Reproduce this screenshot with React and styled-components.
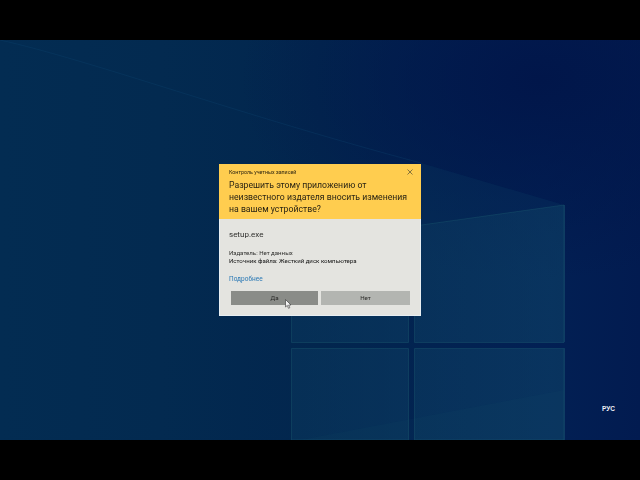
import React from 'react';
import styled, { createGlobalStyle } from 'styled-components';

const Global = createGlobalStyle`
  html, body {
    margin: 0;
    height: 100%;
    background: #000;
  }
`;

const Screen = styled.div`
  width: 640px;
  height: 480px;
  padding: 40px 0;
  box-sizing: border-box;
  background: #000;
  overflow: hidden;
  font-family: Roboto, 'Liberation Sans', sans-serif;
`;

const Desktop = styled.div`
  position: relative;
  height: 400px;
  display: flex;
  align-items: center;
  justify-content: center;
  overflow: hidden;
  background:
    radial-gradient(ellipse 300px 200px at 540px 40px, #01164a 0%, rgba(1, 22, 74, 0) 100%),
    linear-gradient(90deg, #032c52 0%, #032a50 25%, #02264e 50%, #022054 85%, #021b50 100%);
`;

const Wallpaper = styled.svg`
  position: absolute;
  inset: 0;
`;

const Dialog = styled.div`
  position: relative;
  width: 202px;
  height: 152px;
  display: flex;
  flex-direction: column;
  background: #e4e4e0;
  box-shadow: inset 0 0 0 1px #e8eef2;
`;

const Banner = styled.div`
  height: 55px;
  box-sizing: border-box;
  padding: 4px 10px 0;
  background: #ffcd4f;
  color: #2c2410;
`;

const TitleRow = styled.div`
  display: flex;
  align-items: center;
  justify-content: space-between;
  height: 8px;
  font-size: 5.3px;
  line-height: 8px;
  filter: blur(0.2px);
`;

const Close = styled.svg`
  width: 6px;
  height: 6px;
  margin-right: -2px;
  stroke: #7a6a3a;
  stroke-width: 0.9;
`;

const Question = styled.div`
  margin-top: 3px;
  font-size: 8.7px;
  line-height: 12px;
  color: #2a2414;
  white-space: nowrap;
  filter: blur(0.2px);
`;

const Content = styled.div`
  flex: 1;
  padding: 10px 10px 0;
  color: #2e2e2c;
`;

const FileName = styled.div`
  font-size: 8px;
  line-height: 12px;
  filter: blur(0.2px);
`;

const Details = styled.div`
  margin-top: 8px;
  font-size: 6.1px;
  line-height: 8px;
  filter: blur(0.2px);
`;

const Source = styled.div`
  color: #111;
`;

const MoreLink = styled.a`
  display: block;
  margin-top: 10px;
  font-size: 6.5px;
  line-height: 9px;
  color: #2b79b5;
  filter: blur(0.2px);
`;

const Buttons = styled.div`
  display: flex;
  gap: 3px;
  margin: 7px 1px 0 2px;
`;

const Button = styled.div`
  flex: ${(p) => p.$grow};
  height: 14px;
  display: flex;
  align-items: center;
  justify-content: center;
  font-size: 6.2px;
  color: #2a2a28;
  background: ${(p) => (p.$active ? '#8a8c88' : '#b3b5b1')};
  filter: blur(0.2px);
`;

const Cursor = styled.svg`
  position: absolute;
  left: 66px;
  top: 135px;
  width: 7px;
  height: 10px;
`;

const Lang = styled.div`
  position: absolute;
  right: 25px;
  bottom: 28px;
  font-family: 'Liberation Sans', sans-serif;
  font-size: 6.5px;
  font-weight: 700;
  color: #eef2f6;
`;

const App = () => (
  <Screen>
    <Global />
    <Desktop>
      <Wallpaper width="640" height="400" viewBox="0 0 640 400">
        <defs>
          <linearGradient id="pane" gradientUnits="userSpaceOnUse" x1="291" y1="0" x2="564" y2="0">
            <stop offset="0" stopColor="#0b3a60" stopOpacity="0.45" />
            <stop offset="1" stopColor="#10486a" stopOpacity="0.5" />
          </linearGradient>
        </defs>
        {/* light beam above the window */}
        <path d="M421 123 L564 165 L414 186 Z" fill="#0c4468" fillOpacity="0.22" />
        <path d="M0 0 C90 20 240 75 421 123" fill="none" stroke="#0e4670" strokeOpacity="0.3" strokeWidth="1" />
        {/* window panes */}
        <g fill="url(#pane)" stroke="#1f6074" strokeOpacity="0.35" strokeWidth="1">
          <path d="M291.5 215 L408.5 195 V302.5 H291.5 Z" />
          <path d="M414.5 186 L564 165 V302.5 H414.5 Z" />
          <path d="M291.5 308.5 H408.5 V400 H291.5 Z" />
          <path d="M414.5 308.5 H564 V400 H414.5 Z" />
        </g>
        <path d="M564 165 V302 H564.5 V165 Z M564 308 V400 H564.5 V308 Z" fill="#2c7a88" fillOpacity="0.5" />
        <path d="M300 400 L564 350 V400 Z" fill="#1b6478" fillOpacity="0.06" />
      </Wallpaper>
      <Dialog>
        <Banner>
          <TitleRow>
            Контроль учетных записей
            <Close viewBox="0 0 6 6">
              <path d="M0.5 0.5 L5.5 5.5 M5.5 0.5 L0.5 5.5" />
            </Close>
          </TitleRow>
          <Question>
            Разрешить этому приложению от
            <br />
            неизвестного издателя вносить изменения
            <br />
            на вашем устройстве?
          </Question>
        </Banner>
        <Content>
          <FileName>setup.exe</FileName>
          <Details>
            <div>Издатель: Нет данных</div>
            <Source>Источник файла: Жесткий диск компьютера</Source>
          </Details>
          <MoreLink>Подробнее</MoreLink>
          <Buttons>
            <Button $grow={87} $active>Да</Button>
            <Button $grow={89}>Нет</Button>
          </Buttons>
        </Content>
        <Cursor viewBox="0 0 7 10">
          <path d="M0.5 0.5 V8 L2.3 6.4 L3.5 9.3 L4.8 8.7 L3.6 6 H6 Z" fill="#f4f4f4" stroke="#333" strokeWidth="0.6" />
        </Cursor>
      </Dialog>
      <Lang>РУС</Lang>
    </Desktop>
  </Screen>
);

export default App;
